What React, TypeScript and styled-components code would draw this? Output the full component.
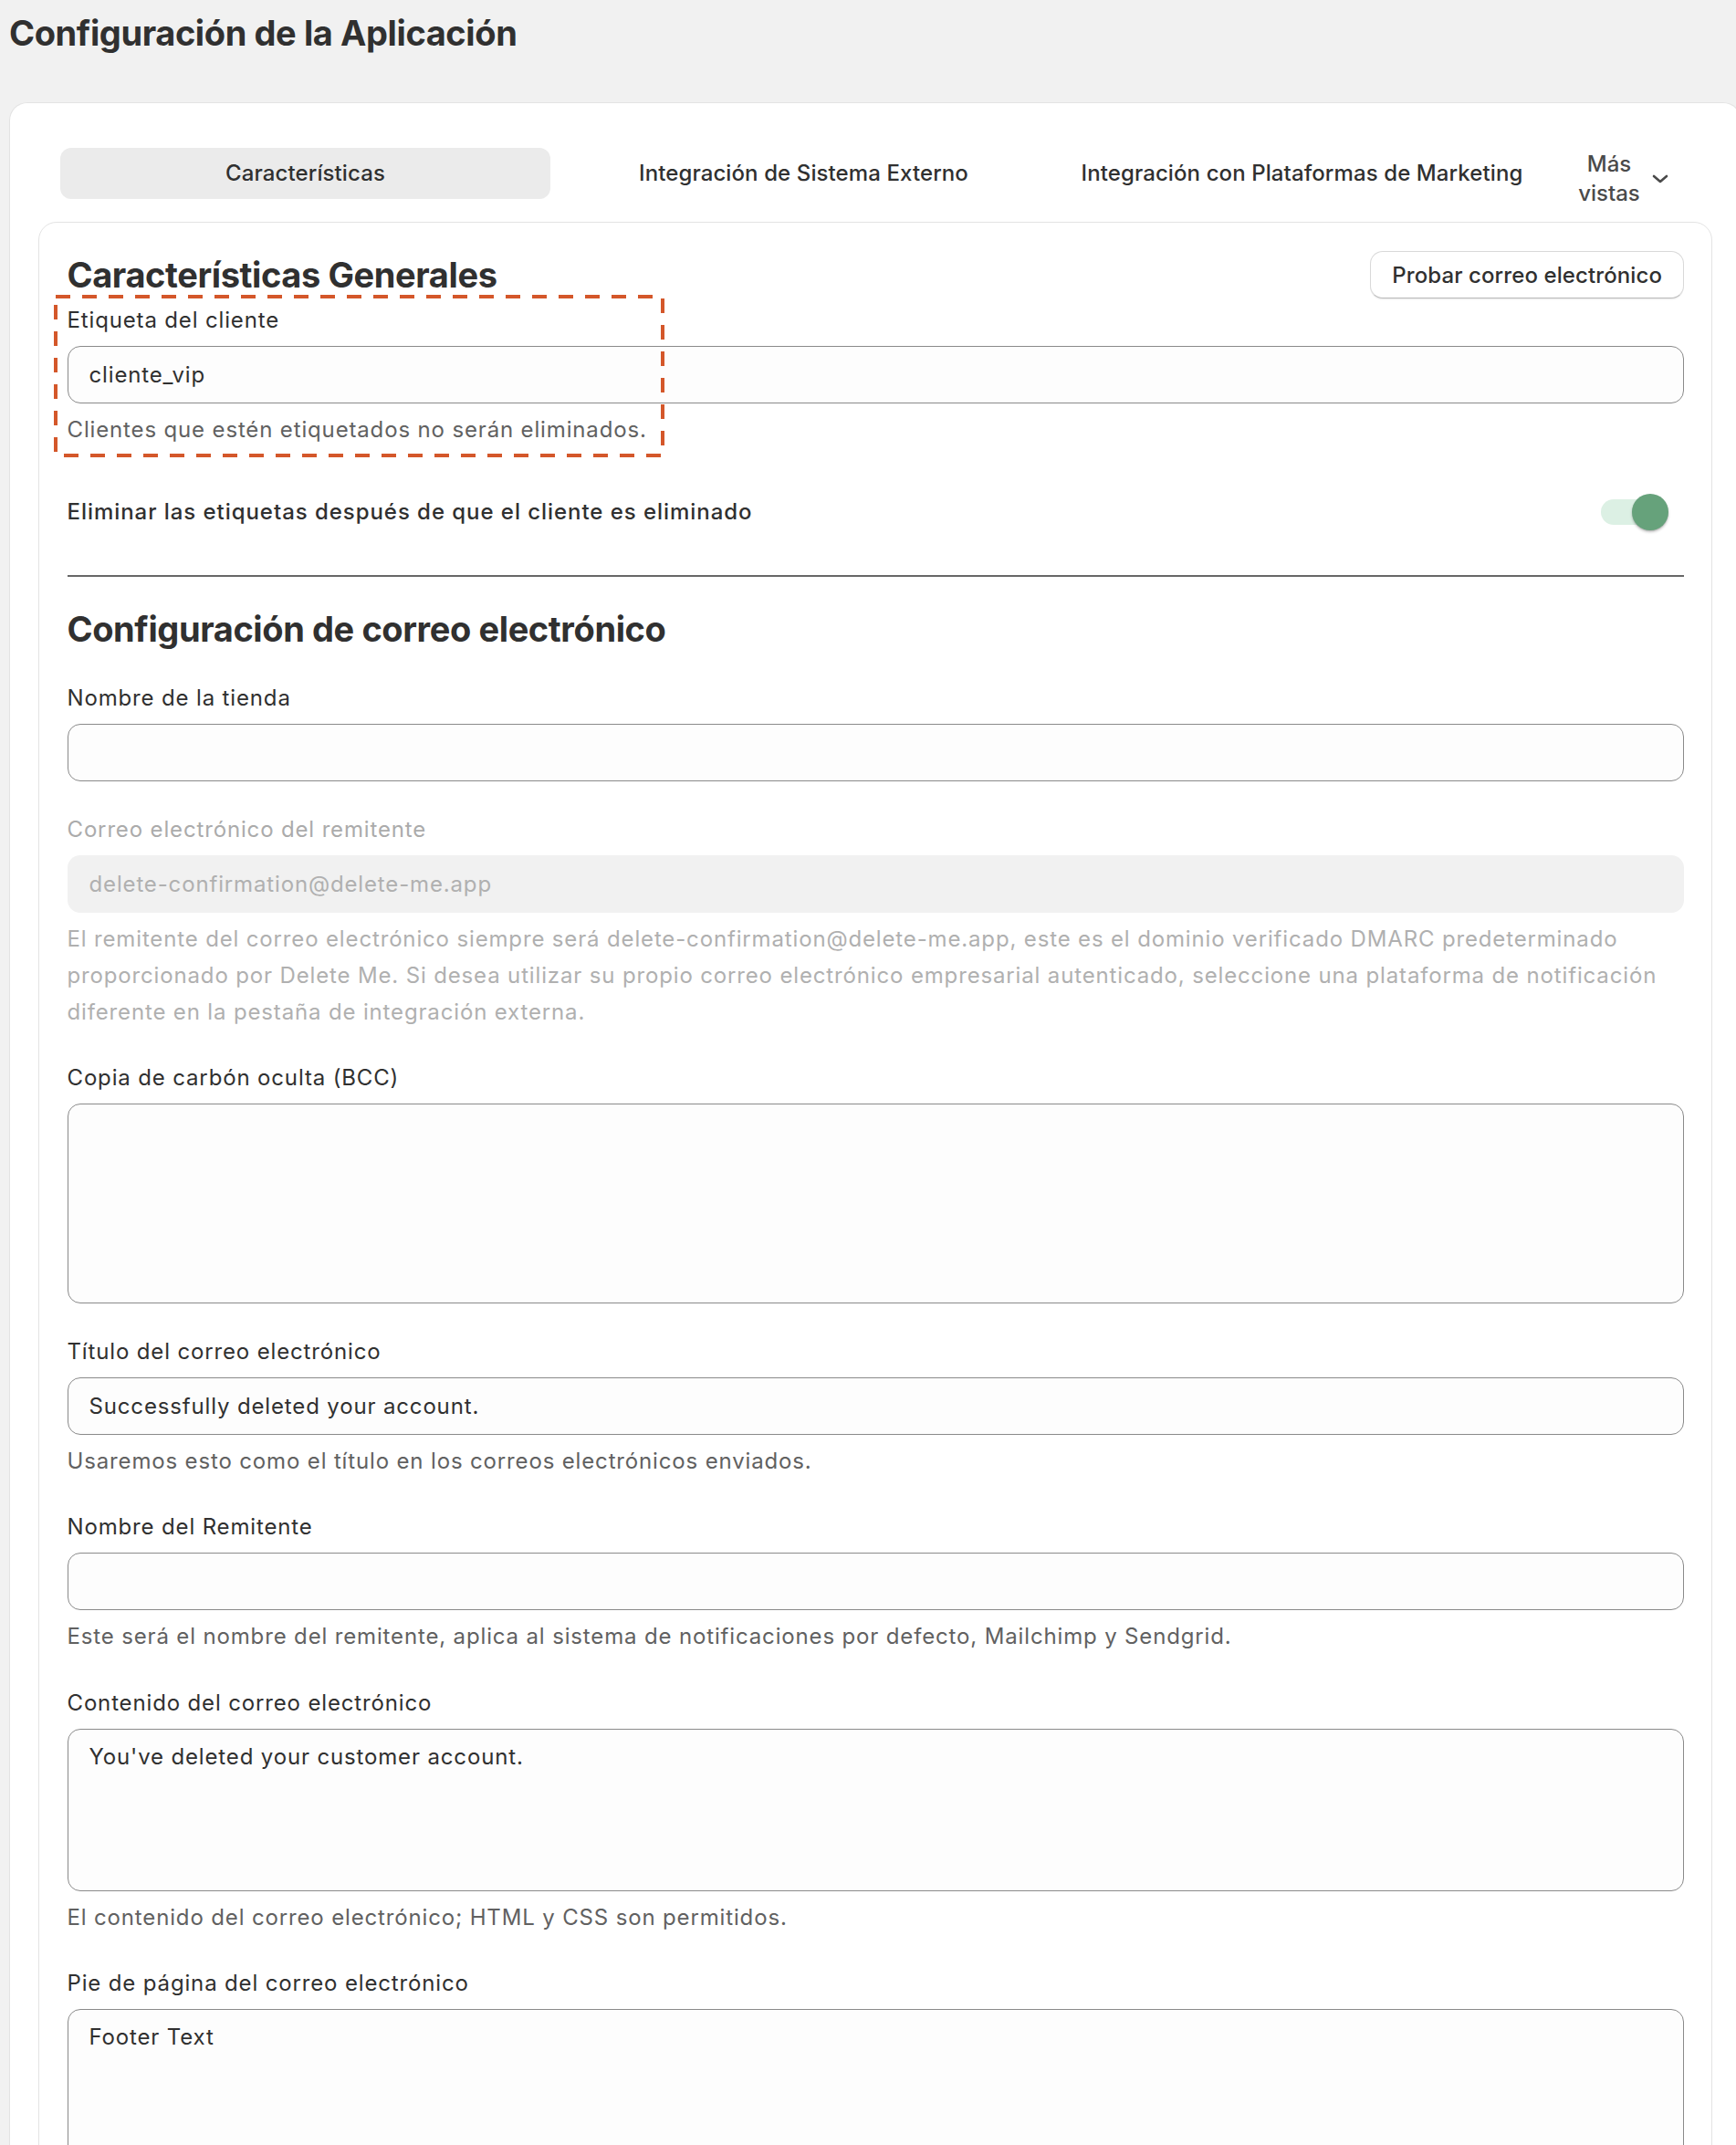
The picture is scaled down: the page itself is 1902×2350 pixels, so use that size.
import React from "react";
import styled, { createGlobalStyle } from "styled-components";

const GlobalStyle = createGlobalStyle`
  html, body {
    margin: 0;
    padding: 0;
    background: #f1f1f1;
    overflow-x: hidden;
  }
  body {
    font-family: Inter, "Noto Sans", "Liberation Sans", sans-serif;
    color: #303030;
    -webkit-font-smoothing: antialiased;
  }
  * { box-sizing: border-box; }
`;

const Page = styled.div`
  padding: 12px 0 0 10px;
`;

const PageTitle = styled.h1`
  margin: 0;
  font-size: 38px;
  line-height: 48px;
  font-weight: 700;
  letter-spacing: -0.4px;
  color: #303030;
`;

const Card = styled.div`
  margin-top: 52px;
  margin-right: -6px;
  background: #ffffff;
  border: 1.5px solid #e3e3e3;
  border-bottom: none;
  border-radius: 20px 20px 0 0;
  padding: 48.5px 31px 60px 31px;
`;

const TabList = styled.div`
  display: flex;
  align-items: center;
  gap: 9px;
  padding: 0 24px;
`;

const Tab = styled.button<{ $active?: boolean }>`
  flex: 0 0 537px;
  height: 56px;
  border: none;
  border-radius: 12px;
  background: ${(p) => (p.$active ? "#ebebeb" : "transparent")};
  font-family: inherit;
  font-size: 24px;
  font-weight: 500;
  letter-spacing: 0.1px;
  color: #303030;
  cursor: pointer;
  padding: 0;
`;

const MoreTab = styled.button`
  display: flex;
  align-items: center;
  gap: 11px;
  height: 56px;
  padding: 13px 0 0 23px;
  border: none;
  background: transparent;
  font-family: inherit;
  cursor: pointer;
`;

const MoreLabel = styled.span`
  width: 72px;
  text-align: center;
  font-size: 24px;
  line-height: 32px;
  font-weight: 500;
  color: #4a4a4a;
`;

const Panel = styled.section`
  margin-top: 25px;
  border: 1.5px solid #e3e3e3;
  border-radius: 20px;
  padding: 31.5px 30px 60px 30.5px;
  background: #ffffff;
`;

const HeaderRow = styled.div`
  display: flex;
  align-items: center;
  justify-content: space-between;
  height: 52px;
`;

const SectionHeading = styled.h2<{ $spaced?: boolean }>`
  margin: ${(p) => (p.$spaced ? "33px 0 32px" : "0")};
  font-size: 38px;
  line-height: 48px;
  font-weight: 700;
  letter-spacing: -0.4px;
  color: #303030;
`;

const SecondaryButton = styled.button`
  height: 52px;
  padding: 0 23px;
  border: 1.5px solid #d9d9d9;
  border-bottom-color: #b8b8b8;
  border-radius: 14px;
  background: #ffffff;
  box-shadow: 0 1.5px 0 rgba(0, 0, 0, 0.06);
  font-family: inherit;
  font-size: 24px;
  font-weight: 500;
  letter-spacing: 0.1px;
  color: #303030;
  cursor: pointer;
`;

const Highlighted = styled.div`
  position: relative;
  margin-top: 4px;
`;

const DashedFrame = styled.svg`
  position: absolute;
  left: -15px;
  top: -8px;
  width: 669px;
  height: 178px;
  overflow: visible;
  pointer-events: none;
`;

const FieldStack = styled.div`
  display: flex;
  flex-direction: column;
  gap: 32.5px;
`;

const Field = styled.div``;

const Label = styled.label<{ $disabled?: boolean }>`
  display: block;
  margin-bottom: 8px;
  font-size: 24px;
  line-height: 40px;
  letter-spacing: 0.85px;
  color: ${(p) => (p.$disabled ? "#ababab" : "#303030")};
`;

const TextInput = styled.input`
  display: block;
  width: 100%;
  height: 63px;
  padding: 0 23px;
  border: 1.5px solid #8a8a8a;
  border-radius: 14px;
  background: #fdfdfd;
  font-family: inherit;
  font-size: 24px;
  letter-spacing: 0.85px;
  color: #303030;
  outline: none;

  &:disabled {
    border-color: transparent;
    background: #f1f1f1;
    color: #b0b0b0;
  }
`;

const TextArea = styled.textarea<{ $height: number }>`
  display: block;
  width: 100%;
  height: ${(p) => p.$height}px;
  padding: 10px 23px;
  border: 1.5px solid #8a8a8a;
  border-radius: 14px;
  background: #fdfdfd;
  font-family: inherit;
  font-size: 24px;
  line-height: 40px;
  letter-spacing: 0.85px;
  color: #303030;
  resize: none;
  outline: none;
`;

const HelpText = styled.p<{ $disabled?: boolean }>`
  margin: 9px 0 0;
  font-size: 24px;
  line-height: 40px;
  letter-spacing: 0.85px;
  color: ${(p) => (p.$disabled ? "#b0b0b0" : "#616161")};
`;

const ToggleRow = styled.div`
  display: flex;
  align-items: center;
  justify-content: space-between;
  height: 40px;
  margin-top: 50px;
`;

const ToggleText = styled.span`
  font-size: 24px;
  line-height: 40px;
  font-weight: 550;
  letter-spacing: 0.95px;
  color: #303030;
`;

const SwitchTrack = styled.span<{ $on: boolean }>`
  position: relative;
  display: inline-block;
  width: 68px;
  height: 28px;
  margin-right: 23px;
  border-radius: 14px;
  background: ${(p) => (p.$on ? "#dcf0e4" : "#e3e3e3")};
`;

const SwitchThumb = styled.span<{ $on: boolean }>`
  position: absolute;
  top: -6px;
  left: ${(p) => (p.$on ? "34px" : "-6px")};
  width: 40px;
  height: 40px;
  border-radius: 50%;
  background: ${(p) => (p.$on ? "#66a27b" : "#fafafa")};
  box-shadow: 0 2px 3px rgba(0, 0, 0, 0.22), 0 1px 1px rgba(0, 0, 0, 0.12);
`;

const Divider = styled.hr`
  margin: 49px 0 0;
  border: none;
  height: 2px;
  background: #676767;
`;

const ChevronDown = () => (
  <svg width="18" height="10" viewBox="0 0 18 10" fill="none">
    <polyline
      points="2,2 9,8 16,2"
      stroke="#4a4a4a"
      strokeWidth="2.6"
      strokeLinecap="round"
      strokeLinejoin="round"
    />
  </svg>
);

export default function App() {
  const [removeTags, setRemoveTags] = React.useState(true);

  return (
    <>
      <GlobalStyle />
      <Page>
        <PageTitle>Configuración de la Aplicación</PageTitle>
        <Card>
          <TabList>
            <Tab $active>Características</Tab>
            <Tab>Integración de Sistema Externo</Tab>
            <Tab>Integración con Plataformas de Marketing</Tab>
            <MoreTab>
              <MoreLabel>Más vistas</MoreLabel>
              <ChevronDown />
            </MoreTab>
          </TabList>

          <Panel>
            <HeaderRow>
              <SectionHeading>Características Generales</SectionHeading>
              <SecondaryButton>Probar correo electrónico</SecondaryButton>
            </HeaderRow>

            <Highlighted>
              <DashedFrame viewBox="0 0 669 178">
                <rect
                  x="2"
                  y="2"
                  width="665"
                  height="174"
                  fill="none"
                  stroke="#d4572a"
                  strokeWidth="4"
                  strokeDasharray="16 13"
                />
              </DashedFrame>
              <Field>
                <Label>Etiqueta del cliente</Label>
                <TextInput defaultValue="cliente_vip" />
                <HelpText>Clientes que estén etiquetados no serán eliminados.</HelpText>
              </Field>
            </Highlighted>

            <ToggleRow>
              <ToggleText>
                Eliminar las etiquetas después de que el cliente es eliminado
              </ToggleText>
              <SwitchTrack $on={removeTags} onClick={() => setRemoveTags((v) => !v)}>
                <SwitchThumb $on={removeTags} />
              </SwitchTrack>
            </ToggleRow>

            <Divider />

            <SectionHeading $spaced>Configuración de correo electrónico</SectionHeading>

            <FieldStack>
              <Field>
                <Label>Nombre de la tienda</Label>
                <TextInput defaultValue="" />
              </Field>

              <Field>
                <Label $disabled>Correo electrónico del remitente</Label>
                <TextInput disabled defaultValue="delete-confirmation@delete-me.app" />
                <HelpText $disabled>
                  El remitente del correo electrónico siempre será
                  delete-confirmation@delete-me.app, este es el dominio verificado
                  DMARC predeterminado proporcionado por Delete Me. Si desea utilizar
                  su propio correo electrónico empresarial autenticado, seleccione una
                  plataforma de notificación diferente en la pestaña de integración
                  externa.
                </HelpText>
              </Field>

              <Field>
                <Label>Copia de carbón oculta (BCC)</Label>
                <TextArea $height={219} defaultValue="" />
              </Field>

              <Field>
                <Label>Título del correo electrónico</Label>
                <TextInput defaultValue="Successfully deleted your account." />
                <HelpText>Usaremos esto como el título en los correos electrónicos enviados.</HelpText>
              </Field>

              <Field>
                <Label>Nombre del Remitente</Label>
                <TextInput defaultValue="" />
                <HelpText>
                  Este será el nombre del remitente, aplica al sistema de notificaciones
                  por defecto, Mailchimp y Sendgrid.
                </HelpText>
              </Field>

              <Field>
                <Label>Contenido del correo electrónico</Label>
                <TextArea $height={178} defaultValue="You've deleted your customer account." />
                <HelpText>El contenido del correo electrónico; HTML y CSS son permitidos.</HelpText>
              </Field>

              <Field>
                <Label>Pie de página del correo electrónico</Label>
                <TextArea $height={219} defaultValue="Footer Text" />
              </Field>
            </FieldStack>
          </Panel>
        </Card>
      </Page>
    </>
  );
}
